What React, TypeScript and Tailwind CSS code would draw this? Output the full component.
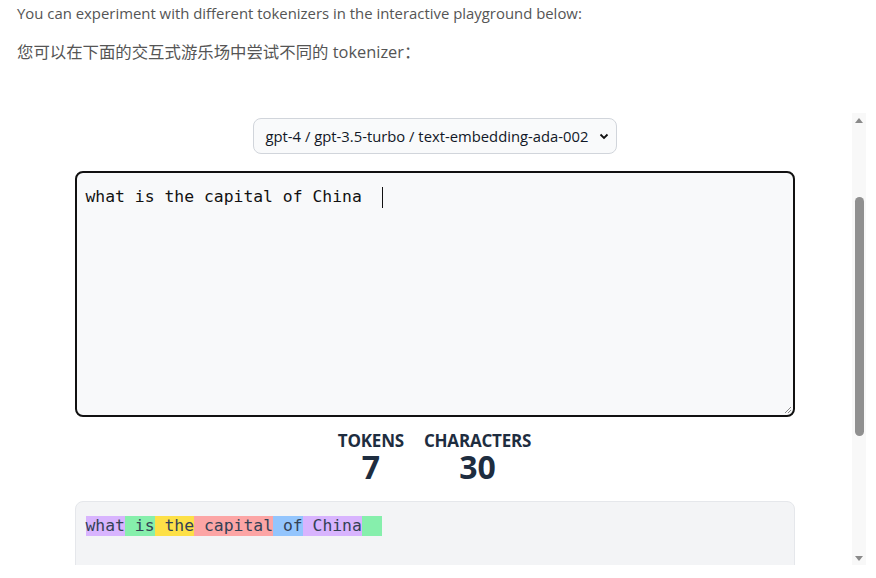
const tokens = [
  { text: "what", color: "bg-[#d8b4fe]" },
  { text: " is", color: "bg-[#86efac]" },
  { text: " the", color: "bg-[#fde047]" },
  { text: " capital", color: "bg-[#fca5a5]" },
  { text: " of", color: "bg-[#93c5fd]" },
  { text: " China", color: "bg-[#d8b4fe]" },
  { text: "  ", color: "bg-[#86efac]" },
]

const mono = { fontFamily: '"DejaVu Sans Mono", "Liberation Mono", monospace' }

function Scrollbar() {
  return (
    <div className="w-[14px] bg-[#f8f8f8] flex flex-col items-center">
      <div className="h-[14px] flex items-center justify-center">
        <div className="w-0 h-0 border-l-[4px] border-r-[4px] border-b-[5px] border-l-transparent border-r-transparent border-b-[#8a8a8a]" />
      </div>
      <div className="h-[70px]" />
      <div className="w-[9px] h-[239px] rounded-full bg-[#909090]" />
      <div className="flex-1" />
      <div className="h-[14px] flex items-center justify-center">
        <div className="w-0 h-0 border-l-[4px] border-r-[4px] border-t-[5px] border-l-transparent border-r-transparent border-t-[#8a8a8a]" />
      </div>
    </div>
  )
}

export default function App() {
  return (
    <div className="w-[876px] h-[578px] bg-white overflow-hidden" style={{ fontFamily: '"Open Sans", "Noto Sans CJK SC", sans-serif' }}>
      <div className="pl-[17px] pt-[3px]">
        <p className="text-[14.9px] leading-[20px] text-[#555]">
          You can experiment with different tokenizers in the interactive playground below:
        </p>
        <p className="mt-[17px] text-[16.4px] leading-[24px] text-[#555]">
          您可以在下面的交互式游乐场中尝试不同的 tokenizer：
        </p>
      </div>

      <div className="ml-[17px] mt-[49px] flex h-[452px]">
        <div className="w-[835px] flex flex-col items-center overflow-hidden">
          <div className="shrink-0 mt-[5px] h-[36px] w-[364px] rounded-lg border border-[#d1d5db] bg-[#f9fafb] flex items-center pl-[12px] pr-[6px]">
            <span className="flex-1 text-[14.8px] text-[#111827]" style={{ fontFamily: '"Open Sans", sans-serif' }}>
              gpt-4 / gpt-3.5-turbo / text-embedding-ada-002
            </span>
            <svg width="12" height="12" viewBox="0 0 12 12">
              <path d="M2.5 4.5 L6 8 L9.5 4.5" fill="none" stroke="#111" strokeWidth="1.8" />
            </svg>
          </div>

          <div className="shrink-0 relative mt-[17px] w-[720px] h-[246px] rounded-lg border-2 border-[#111] bg-[#f8f9fa] px-[9px] pt-[12px]">
            <div className="flex items-center text-[16.4px] leading-[24px] text-[#111] whitespace-pre" style={mono}>
              <span>{"what is the capital of China  "}</span>
              <span className="w-px h-[21px] bg-[#111]" />
            </div>
            <svg className="absolute right-[1px] bottom-[1px]" width="8" height="8" viewBox="0 0 8 8">
              <path d="M7 1 L1 7 M7 4 L4 7" stroke="#888" strokeWidth="1" />
            </svg>
          </div>

          <div className="shrink-0 mt-[14px] flex gap-[20px] text-[#1e2d40]">
            <div className="flex flex-col items-center">
              <span className="text-[17px] leading-[20px] font-bold tracking-[-0.2px]">TOKENS</span>
              <span className="text-[32px] leading-[32px] font-bold">7</span>
            </div>
            <div className="flex flex-col items-center">
              <span className="text-[17px] leading-[20px] font-bold tracking-[-0.2px]">CHARACTERS</span>
              <span className="text-[32px] leading-[32px] font-bold">30</span>
            </div>
          </div>

          <div className="shrink-0 mt-[18px] w-[720px] h-[80px] rounded-lg border border-[#e5e7eb] bg-[#f3f4f6] px-[10px] pt-[14px]">
            <div className="flex text-[16.4px] leading-[20px] text-[#334155] whitespace-pre" style={mono}>
              {tokens.map((t, i) => (
                <span key={i} className={t.color}>{t.text}</span>
              ))}
            </div>
          </div>
        </div>
        <Scrollbar />
      </div>
    </div>
  )
}
